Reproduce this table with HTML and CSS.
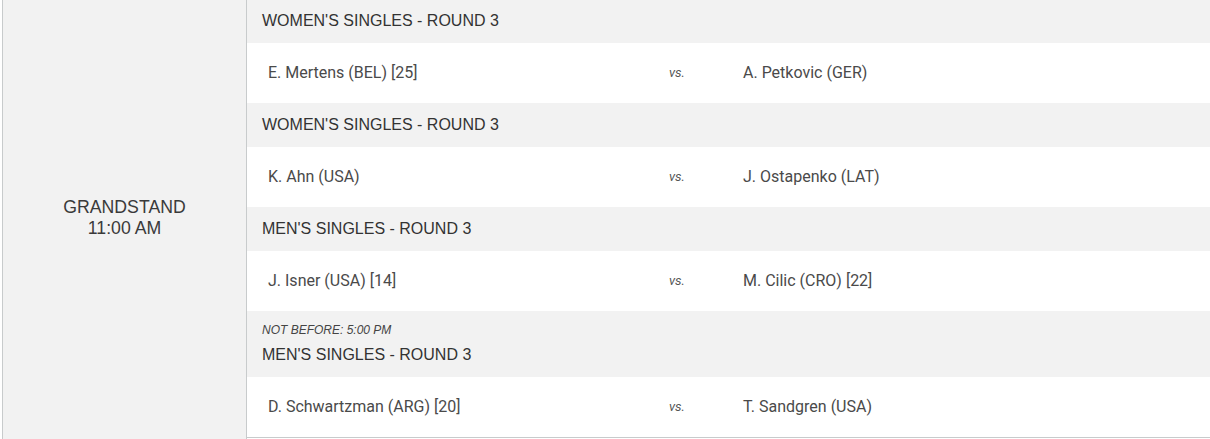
FILE: index.html
```html
<!DOCTYPE html>
<html>
<head>
<meta charset="utf-8">
<link rel="stylesheet" href="styles.css">
</head>
<body>
<div class="schedule">
  <div class="court">
    <div class="court-name">GRANDSTAND</div>
    <div class="court-time">11:00 AM</div>
  </div>
  <div class="matches">
    <div class="event first">WOMEN'S SINGLES - ROUND 3</div>
    <div class="match">
      <span class="p1">E. Mertens (BEL) [25]</span>
      <span class="vs">vs.</span>
      <span class="p2">A. Petkovic (GER)</span>
    </div>
    <div class="event">WOMEN'S SINGLES - ROUND 3</div>
    <div class="match">
      <span class="p1">K. Ahn (USA)</span>
      <span class="vs">vs.</span>
      <span class="p2">J. Ostapenko (LAT)</span>
    </div>
    <div class="event">MEN'S SINGLES - ROUND 3</div>
    <div class="match">
      <span class="p1">J. Isner (USA) [14]</span>
      <span class="vs">vs.</span>
      <span class="p2">M. Cilic (CRO) [22]</span>
    </div>
    <div class="event event-note">
      <div class="note">NOT BEFORE: 5:00 PM</div>
      <div>MEN'S SINGLES - ROUND 3</div>
    </div>
    <div class="match">
      <span class="p1">D. Schwartzman (ARG) [20]</span>
      <span class="vs">vs.</span>
      <span class="p2">T. Sandgren (USA)</span>
    </div>
  </div>
</div>
</body>
</html>
```
FILE: styles.css
```css
html, body {
  margin: 0;
  padding: 0;
  background: #ffffff;
}
* {
  box-sizing: border-box;
}
body {
  font-family: "Liberation Sans", Arial, sans-serif;
  color: #333;
}
.schedule {
  display: flex;
  margin-left: 2px;
  width: 1208px;
  height: 439px;
}
.court {
  width: 245px;
  background: #f2f2f2;
  border-left: 1px solid #c8cbcc;
  border-right: 1px solid #c8cbcc;
  display: flex;
  flex-direction: column;
  justify-content: center;
  align-items: center;
  font-size: 17.7px;
  line-height: 21px;
  color: #3a3a3a;
  padding-bottom: 3px;
}
.matches {
  flex: 1;
  display: flex;
  flex-direction: column;
  height: 438px;
  border-bottom: 1px solid #c8cbcc;
}
.event {
  background: #f2f2f2;
  height: 44px;
  display: flex;
  flex-direction: column;
  justify-content: center;
  padding-left: 15px;
  font-size: 16px;
  line-height: 20px;
  color: #333;
  padding-bottom: 0;
}
.event.first {
  height: 43px;
  padding-bottom: 1px;
}
.event-note {
  height: 66px;
  justify-content: flex-start;
  padding-top: 12px;
  padding-bottom: 0;
}
.note {
  font-size: 12px;
  line-height: 14px;
  font-style: italic;
  color: #444;
  margin-bottom: 8px;
}
.match {
  height: 60px;
  display: grid;
  grid-template-columns: 401px 74px 1fr;
  align-items: center;
  padding-left: 21px;
  padding-bottom: 2px;
  font-family: "Roboto", "Liberation Sans", sans-serif;
  font-size: 16px;
  color: #4a4a4a;
}
.vs {
  font-style: italic;
  font-size: 13px;
  color: #555;
}
```
